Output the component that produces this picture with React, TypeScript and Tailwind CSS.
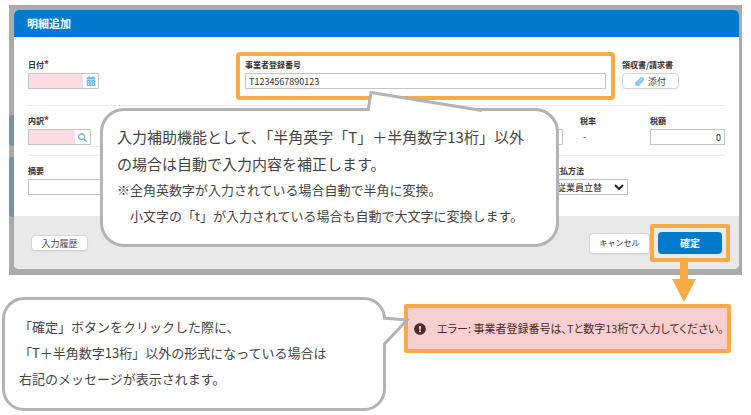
import { useState } from "react";
import type { ReactNode } from "react";
import { FaCalendarAlt, FaExclamationCircle, FaSearch } from "react-icons/fa";

const inputClass =
  "block h-4 w-full border border-[#c4c4c4] bg-white px-[3px] text-[9px] leading-[14px] text-[#333] outline-none";

interface FieldProps {
  id: string;
  label: string;
  required?: boolean;
  className?: string;
  children: ReactNode;
}

function Field({ id, label, required, className, children }: FieldProps) {
  return (
    <div className={`flex flex-col gap-0.5 ${className ?? ""}`}>
      <label htmlFor={id} className="block whitespace-nowrap text-[8px] font-bold leading-3 text-[#333]">
        {label}
        {required && <span className="text-[10px] leading-none text-[#e60033]">*</span>}
      </label>
      {children}
    </div>
  );
}

interface IconInputProps {
  id: string;
  buttonLabel: string;
  icon: ReactNode;
}

function IconInput({ id, buttonLabel, icon }: IconInputProps) {
  return (
    <div className="flex h-4 border border-[#c4c4c4]">
      <input id={id} className="min-w-0 flex-1 bg-[#ffdde6] px-1 text-[9px] outline-none" />
      <button type="button" aria-label={buttonLabel} className="flex w-[15px] items-center justify-center bg-white text-[#6bbcf2]">
        {icon}
      </button>
    </div>
  );
}

function AttachIcon() {
  return (
    <svg viewBox="0 0 16 16" className="h-[9px] w-[9px]" aria-hidden="true">
      <g transform="rotate(-45 8 8)">
        <rect x="-1.5" y="4" width="19" height="8.5" rx="3.5" fill="#86c8f5" />
        <path d="M10 7.2h4.5" stroke="#e3f3fd" strokeWidth="1.3" strokeLinecap="round" />
      </g>
    </svg>
  );
}

function DetailModal() {
  const [registrationNo, setRegistrationNo] = useState("T1234567890123");
  const [tax, setTax] = useState("0");
  const [amount, setAmount] = useState("0");

  return (
    <section className="relative mx-[9px] bg-[#ababab] pt-[5px] pr-[3px] pb-1.5 pl-[5px]">
      {/* page behind the overlay */}
      <div className="absolute inset-y-0 left-0 flex w-[5px] flex-col gap-[11px] pt-[110px]" aria-hidden="true">
        <div className="h-[31px] rounded-l-sm bg-[#7691a1]" />
        <div className="h-[60px] rounded-l-sm bg-[#7691a1]" />
      </div>

      <form className="relative rounded-[5px] bg-white" onSubmit={(e) => e.preventDefault()}>
        <h1 className="rounded-t-[5px] bg-[#007acb] px-[13px] text-[11px] font-bold leading-[27px] text-white">
          明細追加
        </h1>

        <div className="px-3.5 pt-[15px] pb-[21px]">
          <div className="flex items-start border-b border-[#ebebeb] pb-[5px]">
            <div className="w-52 pt-[7px]">
              <Field id="date" label="日付" required className="w-[71px]">
                <IconInput id="date" buttonLabel="カレンダー" icon={<FaCalendarAlt size={10} />} />
              </Field>
            </div>
            <div className="flex-1 rounded-sm border-4 border-[#f7aa45] px-[5px] pt-[3px] pb-[7px]">
              <Field id="registration" label="事業者登録番号">
                <input
                  id="registration"
                  value={registrationNo}
                  onChange={(e) => setRegistrationNo(e.target.value)}
                  className={inputClass}
                />
              </Field>
            </div>
            <div className="w-[110px] pt-[7px] pl-[7px]">
              <Field id="receipt" label="領収書/請求書">
                <button
                  id="receipt"
                  type="button"
                  className="flex h-4 w-[57px] items-center justify-center gap-1 rounded border border-[#d4d4d4] bg-white text-[9px] leading-none text-[#444] shadow-xs"
                >
                  <AttachIcon />
                  添付
                </button>
              </Field>
            </div>
          </div>

          <div className="flex items-start border-b border-[#ebebeb] pt-[9px] pb-2">
            <Field id="category" label="内訳" required className="w-[63px]">
              <IconInput id="category" buttonLabel="検索" icon={<FaSearch size={9} />} />
            </Field>
            <div className="flex-1 self-stretch border-b border-[#ebebeb]" />
            <div className="w-20 pt-3.5 pb-0.5">
              <input
                aria-label="金額"
                value={amount}
                onChange={(e) => setAmount(e.target.value)}
                className={`${inputClass} text-right`}
              />
            </div>
            <div className="w-[87px] pl-[17px] text-[#333]">
              <div className="text-[8px] font-bold leading-3">税率</div>
              <div className="mt-0.5 px-[3px] text-[9px] leading-4">-</div>
            </div>
            <Field id="tax" label="税額" className="w-[75px]">
              <input
                id="tax"
                value={tax}
                onChange={(e) => setTax(e.target.value)}
                className={`${inputClass} text-right`}
              />
            </Field>
          </div>

          <div className="flex items-start gap-3 pt-[9px]">
            <Field id="summary" label="摘要" className="flex-1">
              <input id="summary" className={inputClass} />
            </Field>
            <Field id="payment" label="支払方法" className="w-[173px]">
              <select id="payment" className="block h-4 w-[76px] border border-[#c4c4c4] bg-white text-[9px] leading-[14px] text-[#222]">
                <option>従業員立替</option>
              </select>
            </Field>
          </div>
        </div>

        <div className="flex items-center rounded-b-[5px] bg-[#e9e9e9] pt-2 pr-[9px] pb-[7px] pl-[17px]">
          <button
            type="button"
            className="h-4 w-[57px] rounded border border-[#d4d4d4] bg-white text-[9px] leading-none text-[#444] shadow-xs"
          >
            入力履歴
          </button>
          <button
            type="button"
            className="ml-auto h-[21px] w-[61px] rounded border border-[#d4d4d4] bg-white text-[8px] leading-none text-[#333] shadow-xs"
          >
            キャンセル
          </button>
          <div className="rounded-xs border-4 border-[#f7aa45] p-1">
            <button
              type="submit"
              className="block h-[22px] w-16 rounded bg-[#007acb] text-[10px] font-bold leading-none text-white"
            >
              確定
            </button>
          </div>
        </div>
      </form>

      {/* arrow from the confirm button down to the error */}
      <svg viewBox="0 0 24 40" className="absolute -bottom-[27px] right-[46px] h-10 w-6" aria-hidden="true">
        <path d="M8 0h8v17h8L12 40 0 17h8z" fill="#f7aa45" />
      </svg>

      <InputNote />
    </section>
  );
}

function InputNote() {
  return (
    <div className="absolute top-[103px] right-[183px] left-[91px] rounded-[24px] border-3 border-[#b3b3b3] bg-white pt-3 pb-[15px] pl-[14px] text-[#444]">
      <svg viewBox="0 0 118 22" className="absolute -top-[21px] left-[264px] h-[22px] w-[118px]" aria-hidden="true">
        <path d="M1 22V20L4 2.5 115 20.5V22z" fill="#fff" />
        <path d="M1 21 4 2.5 115 20.5" fill="none" stroke="#b3b3b3" strokeWidth="3" />
      </svg>
      <p className="whitespace-nowrap text-[15px] leading-[27px]">
        入力補助機能として、「半角英字「T」＋半角数字13桁」以外
        <br />
        の場合は自動で入力内容を補正します。
      </p>
      <p className="whitespace-nowrap text-[13px] leading-[26px]">
        ※全角英数字が入力されている場合自動で半角に変換。
      </p>
      <p className="whitespace-nowrap pl-[13px] text-[13px] leading-[26px]">
        小文字の「t」が入力されている場合も自動で大文字に変換します。
      </p>
    </div>
  );
}

function ErrorNote() {
  return (
    <div className="relative w-96 rounded-[22px] border-3 border-[#b3b3b3] bg-white pt-3.5 pb-4 pl-[14px] text-[#444]">
      <p className="whitespace-nowrap text-[13px] leading-[26px]">
        「確定」ボタンをクリックした際に、
        <br />
        「T＋半角数字13桁」以外の形式になっている場合は
        <br />
        右記のメッセージが表示されます。
      </p>
      <svg viewBox="0 0 28 34" className="absolute top-[14px] -right-[27px] h-[34px] w-7" aria-hidden="true">
        <path d="M0 4h2L25 6 2 31H0z" fill="#fff" />
        <path d="M1 4 25 6 1.5 31" fill="none" stroke="#b3b3b3" strokeWidth="3" />
      </svg>
    </div>
  );
}

export default function App() {
  return (
    <main
      lang="ja"
      className="bg-white pt-[5px] font-['Noto_Sans_CJK_JP','Liberation_Sans',sans-serif]"
    >
      <DetailModal />
      <div className="flex items-start pt-[22px] pr-5 pl-0.5">
        <div className="relative z-10">
          <ErrorNote />
        </div>
        <div
          role="alert"
          className="mt-[7px] ml-[18px] flex h-[49px] flex-1 items-center gap-[11px] rounded-xs border-4 border-[#f7aa45] bg-[#f7cfce] pl-1.5 text-[11px] whitespace-nowrap text-[#4d2a2a]"
        >
          <FaExclamationCircle size={12} className="shrink-0" />
          <span className="[font-feature-settings:'palt']">エラー: 事業者登録番号は、Tと数字13桁で入力してください。</span>
        </div>
      </div>
    </main>
  );
}
